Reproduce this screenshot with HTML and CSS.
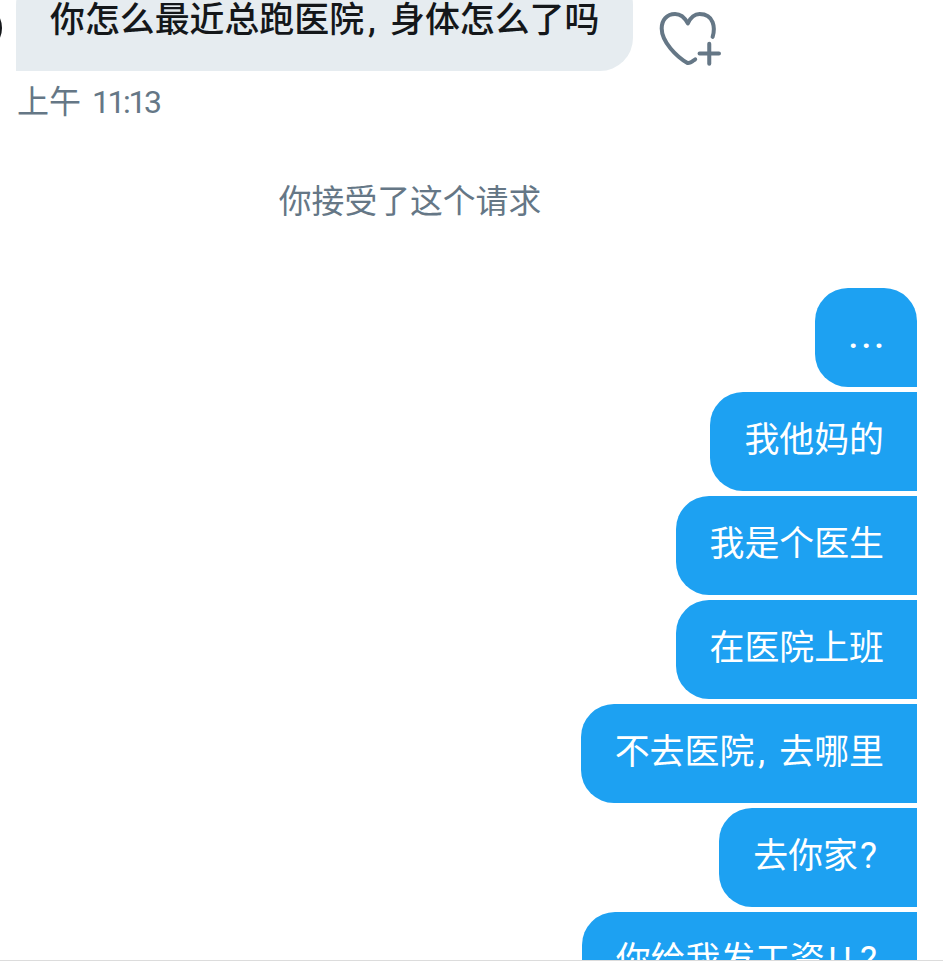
FILE: index.html
```html
<!DOCTYPE html>
<html lang="zh">
<head>
    <meta charset="UTF-8">
    <meta name="viewport" content="width=device-width, initial-scale=1.0">
    <title>私信</title>
    <link rel="stylesheet" href="styles.css">
</head>
<body>
    <div class="chat">
        <div class="received-row">
            <div class="avatar"><div class="avatar-circle"></div></div>
            <div class="bubble received">你怎么最近总跑医院<span class="comma">,</span> 身体怎么了吗</div>
            <svg class="react-icon" viewBox="51 30 200 170" width="67" height="57" fill="none" stroke="#657786" stroke-width="12" stroke-linecap="round" stroke-linejoin="round">
                <path d="M217 110 C225 85 222 42 178 42 C160 42 150 55 143 70 C135 55 125 42 105 42 C80 42 65 60 65 85 C65 125 110 170 142 188 C150 190 158 182 165 177"/>
                <path d="M178 160 H236 M207 131 V190"/>
            </svg>
        </div>
        <div class="time">上午 <span class="clock">11:13</span></div>
        <div class="notice">你接受了这个请求</div>
        <div class="sent-list">
            <div class="bubble sent first"><span class="dots">...</span></div>
            <div class="bubble sent">我他妈的</div>
            <div class="bubble sent">我是个医生</div>
            <div class="bubble sent">在医院上班</div>
            <div class="bubble sent">不去医院<span class="comma">,</span> 去哪里</div>
            <div class="bubble sent">去你家<span class="ask">?</span></div>
            <div class="bubble sent">你给我发工资<span class="bang">!!</span><span class="ask">?</span></div>
        </div>
    </div>
    <div class="bottom-bar"></div>
</body>
</html>
```

FILE: styles.css
```css
body {
    margin: 0;
    background-color: #fff;
    font-family: Roboto, "Noto Sans CJK SC", sans-serif;
}
.chat {
    height: 960px;
    overflow: hidden;
}
.received-row {
    display: flex;
    align-items: flex-start;
    margin-top: -28px;
}
.avatar {
    width: 16px;
    height: 99px;
    overflow: hidden;
    flex-shrink: 0;
}
.avatar-circle {
    width: 48px;
    height: 48px;
    margin: 32px 0 0 -46px;
    border: 3px solid #14171a;
    border-radius: 50%;
    box-sizing: border-box;
}
.bubble {
    box-sizing: border-box;
    height: 99px;
    padding: 0 33px 0 34px;
    font-size: 34.9px;
    line-height: 97px;
    white-space: nowrap;
}
.comma {
    margin: 0 5.5px 0 4px;
}
.ask {
    margin: 0 7px 0 2px;
    font-size: 36px;
}
.bang {
    margin-left: 3px;
    letter-spacing: 6px;
}
.received {
    width: 617px;
    background-color: #e6ecf0;
    color: #14171a;
    font-weight: 500;
    border-radius: 33px 33px 33px 0;
}
.react-icon {
    margin: 38px 0 0 24px;
}
.time {
    margin: 11px 0 0 17px;
    font-size: 32px;
    line-height: 40px;
    word-spacing: 3px;
    color: #657786;
}
.clock {
    letter-spacing: -2.4px;
}
.notice {
    margin-top: 58px;
    width: 820px;
    text-align: center;
    font-size: 32.8px;
    line-height: 44px;
    color: #657786;
}
.sent-list {
    display: flex;
    flex-direction: column;
    align-items: flex-end;
    gap: 5px;
    margin-top: 64px;
    padding-right: 26px;
}
.sent {
    background-color: #1da1f2;
    color: #fff;
    border-radius: 33px 0 0 33px;
}
.sent.first {
    padding-right: 30px;
    border-radius: 33px 33px 0 33px;
}
.dots {
    font-weight: 500;
    letter-spacing: 3.1px;
}
.bottom-bar {
    height: 8px;
    border-top: 1px solid #dcdcdc;
}
```
